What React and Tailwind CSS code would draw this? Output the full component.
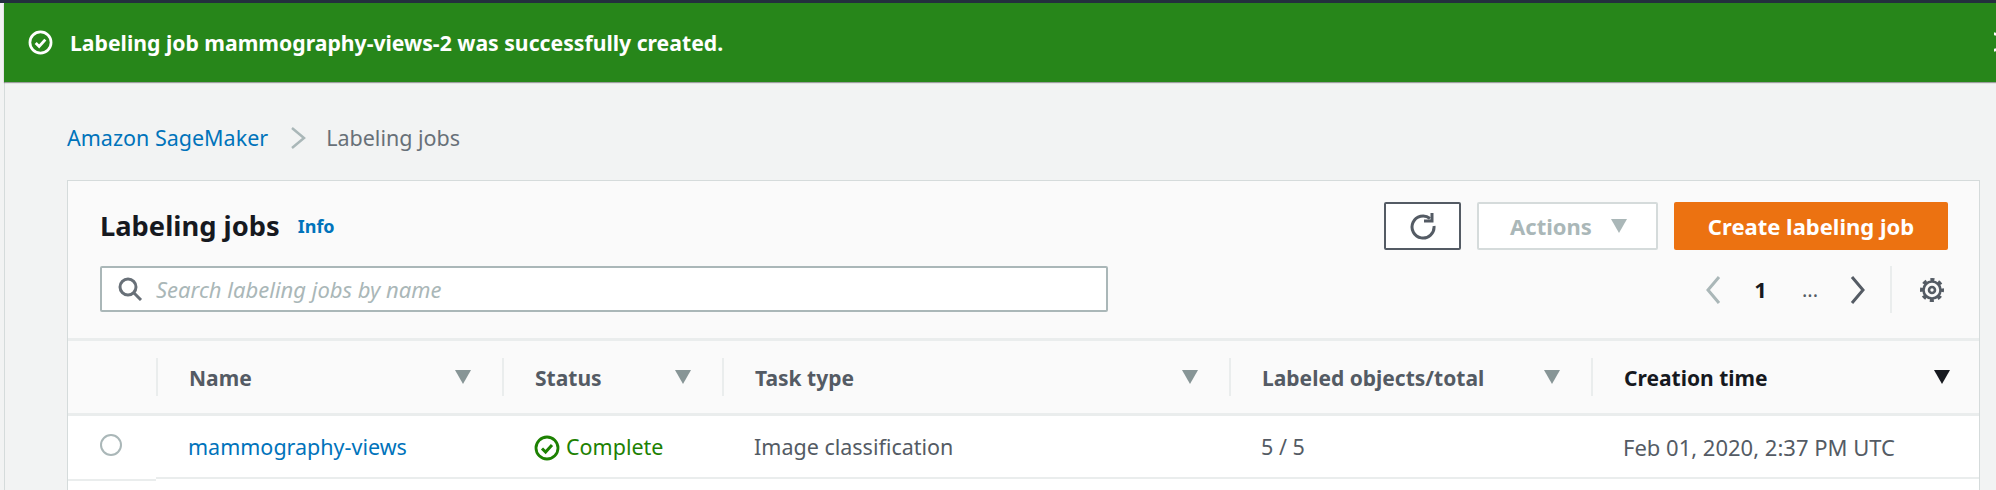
const font = { fontFamily: '"Noto Sans", "Liberation Sans", sans-serif' };
const cols = "grid-cols-[88px_346px_220px_507px_362px_1fr]";

function Caret({ dark }) {
  return (
    <svg width="18" height="14" viewBox="0 0 18 14" className="shrink-0">
      <path d="M1 0h16L9 14z" fill={dark ? "#16191f" : "#879596"} />
    </svg>
  );
}

function CheckCircle({ size, color, width = 2.8 }) {
  return (
    <svg width={size} height={size} viewBox="0 0 26 26" fill="none" stroke={color} strokeWidth={width} className="shrink-0">
      <circle cx="13" cy="13" r="11" />
      <path d="M8 13.5l3.6 3.6L18 10" strokeWidth={width + 0.2} />
    </svg>
  );
}

function HeaderCell({ pr = "pr-[30px]", label, dark }) {
  return (
    <div className={`flex h-[38px] items-center justify-between border-l-2 border-[#eaeded] pl-[31px] ${pr}`}>
      <span className={`pt-[4px] text-[21px] font-bold ${dark ? "text-[#16191f]" : "text-[#545b64]"}`}>{label}</span>
      <Caret dark={dark} />
    </div>
  );
}

export default function App() {
  return (
    <div className="h-[490px] w-[1996px] overflow-hidden bg-[#f2f3f3]" style={font}>
      <div className="h-[3px] bg-[#232f3e]" />
      <div className="relative ml-[4px] flex h-[79px] items-center gap-[17px] bg-[#27861a] pl-[24px] text-white shadow-[0_1px_1px_rgba(0,0,0,0.35)]">
        <CheckCircle size={25} color="#fff" />
        <span className="text-[21.2px] font-bold">Labeling job mammography-views-2 was successfully created.</span>
        <svg width="2" height="22" viewBox="0 0 2 22" fill="none" stroke="#fff" strokeWidth="2.5" className="ml-auto">
          <path d="M0 1l2 2M0 19l2-2" />
        </svg>
      </div>
      <div className="ml-[4px] border-l border-[#d5dbdb] pl-[62px] pr-[16px]">
        <div className="flex h-[98px] items-center pt-[14px] text-[21.5px]">
          <span className="text-[#0073bb]">Amazon SageMaker</span>
          <svg width="18" height="24" viewBox="0 0 18 24" fill="none" stroke="#aab7b8" strokeWidth="2.5" className="ml-[22px] mr-[18px]">
            <path d="M2 2l12 10L2 22" />
          </svg>
          <span className="text-[#687078]">Labeling jobs</span>
        </div>
        <div className="border-x border-t border-[#d5dbdb] bg-[#fafafa]">
          <div className="flex h-[157px] justify-between pl-[32px] pr-[31px] pt-[21px]">
            <div>
              <div className="flex h-[48px] items-center gap-[18px]">
                <span className="text-[27.3px] font-bold text-[#16191f]">Labeling jobs</span>
                <span className="text-[18px] font-bold text-[#0073bb]">Info</span>
              </div>
              <div className="mt-[16px] flex h-[46px] w-[1008px] items-center gap-[13px] rounded-[2px] border-2 border-[#aab7b8] bg-white pl-[15px]">
                <svg width="26" height="24" viewBox="0 0 26 24" fill="none" stroke="#687078" strokeWidth="3">
                  <circle cx="11" cy="10" r="8" />
                  <path d="M17 16l7 7" />
                </svg>
                <span className="text-[22px] italic text-[#aab7b8]">Search labeling jobs by name</span>
              </div>
            </div>
            <div className="flex flex-col items-end">
              <div className="flex gap-[16px]">
                <div className="flex h-[48px] w-[77px] items-center justify-center rounded-[2px] border-2 border-[#545b64] bg-white">
                  <svg width="28" height="28" viewBox="0 0 28 28" fill="none" stroke="#545b64" strokeWidth="3">
                    <path d="M21 6.5A11 11 0 1 0 25 14" />
                    <path d="M23 1v8h-8" />
                  </svg>
                </div>
                <div className="flex h-[48px] w-[181px] items-center justify-center gap-[18px] rounded-[2px] border-2 border-[#d5dbdb] bg-white pl-[3px]">
                  <span className="text-[22px] font-bold text-[#aab7b8]">Actions</span>
                  <svg width="18" height="14" viewBox="0 0 18 14"><path d="M1 0h16L9 14z" fill="#aab7b8" /></svg>
                </div>
                <div className="flex h-[48px] w-[274px] items-center justify-center rounded-[2px] bg-[#ec7211] text-[22px] font-bold text-white">
                  Create labeling job
                </div>
              </div>
              <div className="mt-[16px] flex h-[47px] items-center">
                <svg width="16" height="30" viewBox="0 0 16 30" fill="none" stroke="#aab7b8" strokeWidth="3"><path d="M14 2L3 15l11 13" /></svg>
                <span className="ml-[33px] text-[22px] font-bold text-[#16191f]">1</span>
                <span className="ml-[35px] text-[20px] text-[#545b64]">...</span>
                <svg width="16" height="30" viewBox="0 0 16 30" fill="none" stroke="#545b64" strokeWidth="3" className="ml-[32px]"><path d="M2 2l11 13L2 28" /></svg>
                <div className="ml-[24px] h-[47px] w-[2px] bg-[#eaeded]" />
                <svg width="26" height="26" viewBox="0 0 26 26" fill="none" stroke="#545b64" className="ml-[27px] mr-[3px]">
                  <circle cx="13" cy="13" r="3" strokeWidth="2.6" />
                  <circle cx="13" cy="13" r="8.5" strokeWidth="2.6" />
                  <circle cx="13" cy="13" r="10.5" strokeWidth="3" strokeDasharray="4.1 4.15" strokeDashoffset="2" />
                </svg>
              </div>
            </div>
          </div>
          <div className={`grid h-[78px] ${cols} items-center border-y-[3px] border-[#eaeded]`}>
            <div />
            <HeaderCell label="Name" />
            <HeaderCell label="Status" />
            <HeaderCell label="Task type" />
            <HeaderCell label="Labeled objects/total" />
            <HeaderCell label="Creation time" pr="pr-[28px]" dark />
          </div>
          <div className={`grid h-[61px] ${cols} items-center bg-white pt-[2px] text-[21.5px] text-[#545b64]`}>
            <div className="pl-[32px]">
              <div className="mb-[6px] h-[22px] w-[22px] rounded-full border-2 border-[#aab7b8]" />
            </div>
            <div className="pl-[32px] text-[#0073bb]">mammography-views</div>
            <div className="flex items-center gap-[6px] pl-[32px] text-[#1d8102]">
              <CheckCircle size={26} color="#1d8102" />
              Complete
            </div>
            <div className="pl-[32px]">Image classification</div>
            <div className="pl-[32px]">5 / 5</div>
            <div className="pl-[32px] text-[22px]">Feb 01, 2020, 2:37 PM UTC</div>
          </div>
          {/* the first column's rule sits a little lower than the others */}
          <div className="grid h-[24px] grid-cols-[88px_1fr] bg-white">
            <div className="mt-[2px] h-[2px] bg-[#eaeded]" />
            <div className="h-[2px] bg-[#eaeded]" />
          </div>
        </div>
      </div>
    </div>
  );
}
